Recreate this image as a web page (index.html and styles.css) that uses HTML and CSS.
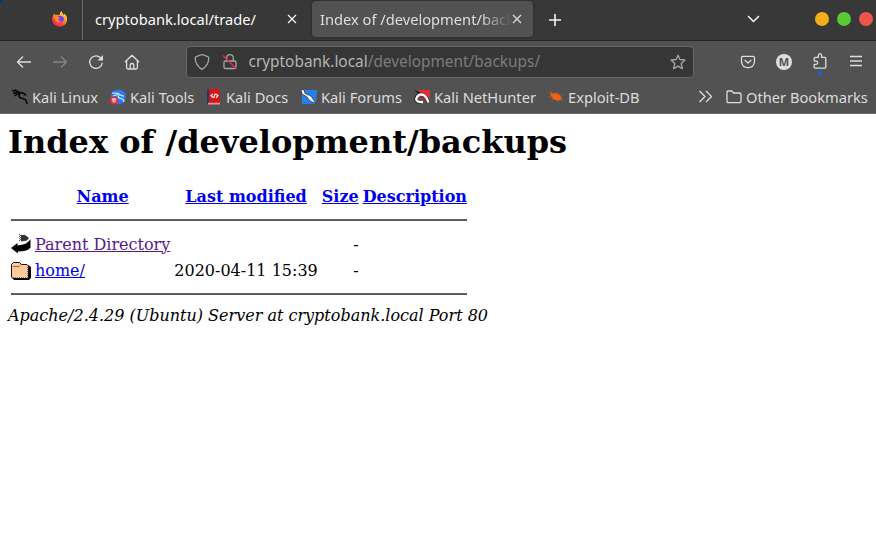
FILE: index.html
```html
<!DOCTYPE html>
<html lang="en">
<head>
<meta charset="utf-8">
<title>Index of /development/backups</title>
<link rel="stylesheet" href="styles.css">
</head>
<body>
<div class="desktop">
<header class="chrome">
  <div class="tabs">
    <svg class="firefox" width="18" height="18" viewBox="0 0 18 18">
      <defs>
        <linearGradient id="fire" x1=".8" y1="0" x2=".2" y2="1"><stop offset="0" stop-color="#fff044"/><stop offset=".4" stop-color="#ff9a22"/><stop offset=".7" stop-color="#ff4936"/><stop offset="1" stop-color="#ec1470"/></linearGradient>
      </defs>
      <path d="M3 3.5L4.2 5 6 4.8 8.8 5 9 2.5 10.8 1 11 2.5 13 5 13.2 3.4 15.5 6Q17.3 12 13.5 15 9 18.2 4.3 15.2 0 12 1.5 7Z" fill="url(#fire)"/>
      <path d="M7 6Q11 4.7 13 8 13.2 12.2 9.5 12.5 5.8 12 5.8 9Z" fill="#7541e5"/>
      <path d="M3 7.4Q5 5.6 7 7L9 7.8 7 9.2Q7.6 11 10 10.7 8.4 13 5.5 11.5 4 10 3 7.4Z" fill="#ff8b22"/>
    </svg>
    <div class="tab first"><span class="tab-title">cryptobank.local/trade/</span>
      <svg class="close" width="10" height="10" viewBox="0 0 10 10"><path d="M1 1l8 8M9 1l-8 8"/></svg></div>
    <div class="tab active"><span class="tab-title fade">Index of /development/backups</span>
      <svg class="close" width="10" height="10" viewBox="0 0 10 10"><path d="M1 1l8 8M9 1l-8 8"/></svg></div>
    <svg class="new-tab" width="12" height="12" viewBox="0 0 12 12"><path d="M6 0v12M0 6h12"/></svg>
    <svg class="all-tabs" width="13" height="8" viewBox="0 0 13 8"><path d="M1 1l5.5 5.5L12 1"/></svg>
    <i class="dot amber"></i><i class="dot green"></i><i class="dot red"></i>
  </div>

  <div class="nav">
    <svg class="ico back" width="16" height="16" viewBox="0 0 16 16"><path d="M15 8H1.8M7 2.5L1.5 8 7 13.5"/></svg>
    <svg class="ico forward" width="16" height="16" viewBox="0 0 16 16"><path d="M1 8h13.2M9 2.5L14.5 8 9 13.5"/></svg>
    <svg class="ico reload" width="16" height="16" viewBox="0 0 16 16"><path d="M13.2 4.5A6.3 6.3 0 1 0 14.3 8.8"/><path class="solid" d="M15 1v5.5H9.5Z"/></svg>
    <svg class="ico home" width="16" height="16" viewBox="0 0 16 16"><path d="M1 8L8 1.3 15 8M2.6 7v6.5Q2.6 15 4 15H12Q13.4 15 13.4 13.5V7M6.2 15v-4Q6.2 9.5 8 9.5T9.8 11v4"/></svg>
    <div class="urlbar">
      <svg class="ico muted shield" width="16" height="18" viewBox="0 0 16 18"><path d="M8 1.5L13.8 3.6Q15 4 14.8 5.5 14.5 12.3 8 16.4 1.5 12.3 1.2 5.5 1 4 2.2 3.6Z"/></svg>
      <svg class="ico muted lock" width="16" height="18" viewBox="0 0 16 18"><path d="M4.7 8V5Q4.7 1.6 8 1.6T11.3 5v3M3.5 8h9Q14 8 14 9.5V14Q14 15.5 12.5 15.5h-9Q2 15.5 2 14V9.5Q2 8 3.5 8Z"/><path class="slash" d="M1 2.5L14.5 16"/></svg>
      <span class="url">cryptobank.local<span class="path">/development/backups/</span></span>
      <svg class="ico muted star" width="16" height="16" viewBox="0 0 16 16"><path d="M8 1.2L9.9 5.5 15 6 11.2 9.5 12.4 14.7 8 12.1 3.6 14.7 4.8 9.5 1 6 6.1 5.5Z"/></svg>
    </div>
    <svg class="ico pocket" width="16" height="14" viewBox="0 0 16 14"><path d="M3 1.3H13Q14.5 1.3 14.5 3V6.5Q14 12.6 8 12.7 2 12.6 1.5 6.5V3Q1.5 1.3 3 1.3ZM4.6 5L8 8 11.4 5"/></svg>
    <span class="account">M</span>
    <span class="ext"><svg class="ico" width="16" height="18" viewBox="0 0 16 18"><path d="M2.2 9.2V6.2Q2.2 5.3 3.3 5.3H6.4V3.5Q6.4 1.6 8 1.6T9.6 3.5V5.3H12.6Q13.8 5.3 13.8 6.4V15Q13.8 16.2 12.6 16.2H3.3Q2.2 16.2 2.2 15V12.3H4Q5.7 12.2 5.7 10.7T4 9.2H2.2"/></svg></span>
    <svg class="ico menu" width="12" height="12" viewBox="0 0 12 12"><path d="M0 1.5h12M0 6h12M0 10.5h12"/></svg>
  </div>

  <div class="bookmarks">
    <span class="bm kali-linux"><svg width="16" height="16" viewBox="0 0 16 16"><path d="M0 1.5Q5 1.5 8 3.5 12 3.5 14 6.5M1 4.5Q5 3 8 4.5M2.5 7Q5 5 8 4.8M8 4.5Q5.5 8 9.5 9.3 14.5 9.5 15 15" stroke="#070707" stroke-width="1.6" fill="none"/><path d="M3 .3L7 2.8" stroke="#111" fill="none"/></svg>Kali Linux</span>
    <span class="bm kali-tools"><svg width="16" height="16" viewBox="0 0 16 16"><circle cx="8.3" cy="7.8" r="7.4" fill="#287bf3"/><path d="M2 4L8 4.4 11 6.2 14 7.4M3 7L8 5.5M9 6Q7 9 11 9.5 14 10 14 13" fill="none" stroke="#d6eaff" stroke-width="1.2"/><circle cx="4" cy="11.5" r="4" fill="#e92b31"/><path d="M1.8 10H6.3M3.2 10v3.5M5 10v3.5" stroke="#fff" fill="none"/></svg>Kali Tools</span>
    <span class="bm kali-docs"><svg width="16" height="16" viewBox="0 0 16 16"><path d="M2 0H14V16H2Z" fill="#d71419"/><path d="M1 0H3V15H1Z" fill="#203b69"/><path d="M2 13.8H14V15.5H2Z" fill="#c4a49e"/><path d="M7 4.8L5 6.8 7.2 8.5M9.8 5L12 6.5 10 8.8M9.3 4.5L7.8 9" stroke="#fff" stroke-width="1.1" fill="none"/></svg>Kali Docs</span>
    <span class="bm kali-forums"><svg width="16" height="16" viewBox="0 0 16 16"><path d="M1 1H16L15 15H1Z" fill="#277fed"/><path d="M0 0L3 1 4 4 10 7 15 14.5 9 12 6 8 1 5Z" fill="#fff" stroke="#18202b" stroke-width=".7"/><path d="M3 4L7 7" stroke="#777" stroke-width=".7"/></svg>Kali Forums</span>
    <span class="bm kali-nethunter"><svg width="16" height="16" viewBox="0 0 16 16"><path d="M2 1H16L15 14Z" fill="#ee2939"/><path d="M0 1L6 3 5 5Z" fill="#111"/><path d="M7 13.5Q1.8 13 2 9.5 3.5 5 8 5.3 12 6 14.5 13.5" fill="none" stroke="#222" stroke-width="3.4"/><path d="M9 13Q2.2 13.5 2.2 10 3.5 5.3 8 5.5 12 6 14.5 13.5" fill="none" stroke="#fff" stroke-width="2.3"/><path d="M5 10Q7 7.7 9.5 10.5" fill="none" stroke="#c51f30" stroke-width="1.5"/></svg>Kali NetHunter</span>
    <span class="bm exploit-db"><svg width="16" height="16" viewBox="0 0 16 16"><path d="M2 5L4 3 5 5 8 4 12 6 14 10 10 12 5 10Z" fill="#f16215"/><path d="M1 3L5 6M0 8L5 8M3 12L6 9M8 3L8 6M11 4L11 7M15 6L12 8M9 13L10 10M15 12L12 9" stroke="#c9571d" stroke-width=".6" fill="none"/></svg>Exploit-DB</span>
    <svg class="ico overflow" width="15" height="13" viewBox="0 0 15 13"><path d="M1.5 1L7 6.5 1.5 12M8 1L13.5 6.5 8 12"/></svg>
    <span class="bm other"><svg class="ico" width="16" height="16" viewBox="0 0 16 16"><path d="M2.3 2H5.8L7.5 4H13.7Q15 4 15 5.3V12.3Q15 13.6 13.7 13.6H2.3Q1 13.6 1 12.3V3.3Q1 2 2.3 2Z"/></svg>Other Bookmarks</span>
  </div>
</header>

<main class="page">
<h1>Index of /development/backups</h1>
<table>
<tr><th></th><th><a href="#">Name</a></th><th><a href="#">Last modified</a></th><th><a href="#">Size</a></th><th><a href="#">Description</a></th></tr>
<tr><th colspan="5"><hr></th></tr>
<tr><td class="icon"><svg width="20" height="22" viewBox="0 0 20 22"><path d="M10 2H14L18 5 16 7.5 10 8.5Z" fill="#333"/><path d="M8.5 1V8M9.5 2V8" stroke="#555" stroke-dasharray="1 1"/><path d="M19.5 6V14.5Q17 18.5 7 18.5V20.5L0 15 6.5 10V12.5Q17 11.5 19.5 6Z" fill="#000"/></svg></td><td><a class="visited" href="#">Parent Directory</a></td><td>&nbsp;</td><td class="right">-</td><td>&nbsp;</td></tr>
<tr><td class="icon"><svg class="folder" width="20" height="22" viewBox="0 0 20 22"><path d="M2 3H9L11 5H17L20 7V18L18 20H3L1 18V5Z" fill="#000"/><path d="M.5 17V4.5L2.5 2.5H8.5L10.5 4.5H16L17.5 6V17L16 18.5H2Z" fill="#fc9" stroke="#111"/><path d="M2 6.5H8L10 4.5" stroke="#996633" fill="none"/><path d="M2 17.5H16.5V7" stroke="#966" fill="none" stroke-dasharray="1 1"/></svg></td><td><a href="#">home/</a></td><td class="right">2020-04-11 15:39</td><td class="right">-</td><td>&nbsp;</td></tr>
<tr><th colspan="5"><hr></th></tr>
</table>
<address>Apache/2.4.29 (Ubuntu) Server at cryptobank.local Port 80</address>
</main>
</div>
</body>
</html>
```
FILE: styles.css
```css
* { box-sizing: border-box; }
body { margin: 0; background: #fff; }
svg { display: block; flex: none; }
.desktop { width: 876px; height: 557px; background: #083c65; overflow: hidden; }
.chrome { height: 114px; background: #525252; border-bottom: 1px solid #6b6a6b; border-radius: 7px 0 0; overflow: hidden; font: 14.67px "Noto Sans", sans-serif; color: #dcdcdc; }
.tabs { height: 41px; background: #383838; border-bottom: 1px solid #252525; display: flex; align-items: center; }
.firefox { margin-left: 51px; margin-right: 13px; margin-top: -3px; }
.tab { display: flex; align-items: center; height: 36px; border-radius: 4px; margin-top: -2px; }
.tab.first { width: 230px; height: 40px; margin-top: 0; padding: 0 15px 2px 12px; border-left: 1px solid #6a6a6a; border-radius: 0; color: #fbfbfb; }
.tab.active { width: 221px; background: #525252; padding: 0 11px 0 8px; color: #dedede; box-shadow: 0 0 3px #222; }
.tab-title { flex: 1; white-space: nowrap; overflow: hidden; }
.fade { -webkit-mask-image: linear-gradient(to left, transparent 0, #000 32px); mask-image: linear-gradient(to left, transparent 0, #000 32px); }
.close, .new-tab, .all-tabs { fill: none; stroke: #f4f4f4; stroke-width: 1.3; }
.tab.active .close { stroke: #ddd; }
.new-tab { margin-left: 16px; margin-top: -1px; stroke-width: 1.6; }
.all-tabs { margin-left: auto; margin-right: 55px; margin-top: -3px; stroke-width: 1.5; }
.dot { width: 14px; height: 14px; border-radius: 50%; margin: -2px 8px 0 0; flex: none; }
.amber { background: #f3af1b; }
.green { background: #57ca35; }
.red { background: #ed544b; margin-right: 3px; }
.nav { height: 41px; display: flex; align-items: center; }
.ico { fill: none; stroke: #dedede; stroke-width: 1.3; stroke-linejoin: round; }
.ico .solid { fill: #dedede; stroke: none; }
.back { margin-left: 16px; }
.forward { margin-left: 20px; stroke: #858585; }
.reload { margin-left: 20px; }
.home { margin-left: 20px; }
.urlbar { width: 508px; height: 32px; margin-left: 46px; background: #363636; border: 1px solid #676767; border-radius: 4px; display: flex; align-items: center; padding: 0 7px; }
.muted { stroke: #a6a6a6; }
.lock { margin: 0 10.5px 0 12px; }
.lock .slash { stroke: #e82a4e; stroke-width: 1.4; }
.url { font-size: 15.4px; color: #b5b5b5; flex: 1; white-space: nowrap; }
.path { color: #7c7c7c; }
.pocket { margin-left: 46px; }
.account { width: 16px; height: 16px; border-radius: 50%; background: #dedede; color: #515151; font: bold 11px/16px "Open Sans", sans-serif; text-align: center; margin-left: 20px; }
.ext { position: relative; margin-left: 20px; margin-top: -2px; }
.ext::after { content: ""; position: absolute; width: 4px; height: 4px; left: 6px; bottom: -5px; border-radius: 50%; background: #0561fc; }
.menu { margin-left: 22px; margin-top: -2px; }
.bookmarks { height: 29px; display: flex; align-items: center; padding-left: 12px; }
.bm { display: flex; align-items: center; gap: 4px; white-space: nowrap; height: 29px; flex: none; }
.kali-linux { width: 98px; }
.kali-tools { width: 96px; }
.kali-docs { width: 95px; }
.kali-forums { width: 113px; }
.kali-nethunter { width: 134px; }
.exploit-db { width: 150px; }
.other { margin-left: 13px; }
.page { height: 443px; background: #fff; color: #000; padding: 9px 8px 8px; font: 16px "DejaVu Serif", serif; }
h1 { margin: 0 0 22px; font-size: 32px; line-height: 39px; }
table { border-spacing: 2px; border-collapse: separate; }
td, th { padding: 1px; }
.icon { height: 24px; }
.folder { margin: 1px 0 -1px; }
.right { text-align: right; }
a { color: #0000ee; text-decoration: underline; }
a.visited { color: #551a8b; }
hr { margin: 8px 0; border: 1px solid #555; border-top-color: #666; }
tr:nth-child(2) hr { margin-top: 9px; }
address { font-style: italic; }
```
